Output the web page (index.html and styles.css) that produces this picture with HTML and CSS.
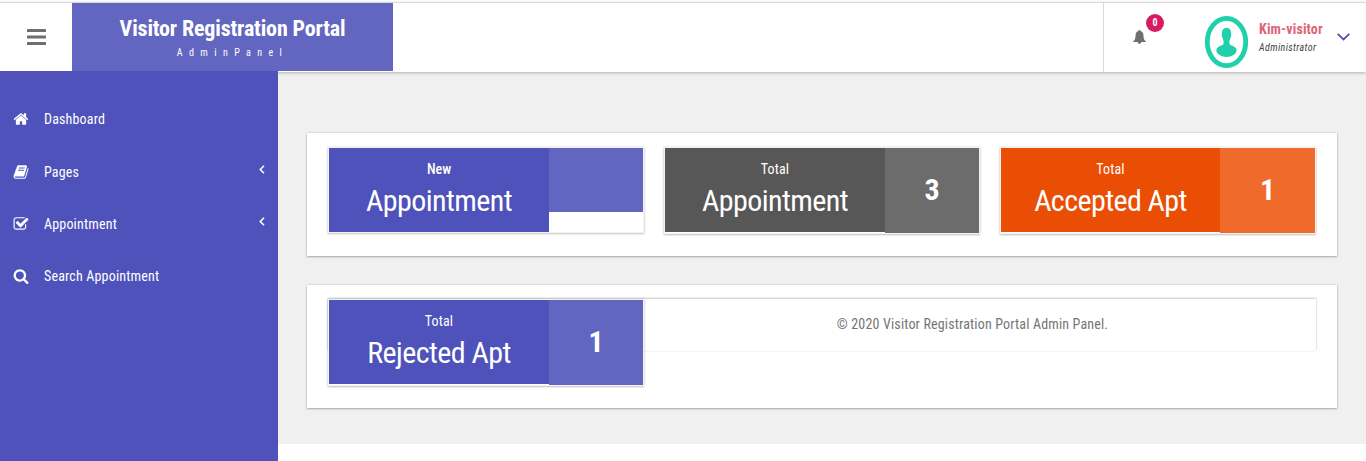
FILE: index.html
```html
<!DOCTYPE html>
<html lang="en">
<head>
<meta charset="utf-8">
<title>Visitor Registration Portal</title>
<link rel="stylesheet" href="styles.css">
</head>
<body>
<header class="topbar">
  <div class="menu-toggle"><svg width="19" height="16" viewBox="0 0 19 16"><rect width="19" height="3" rx=".6"/><rect y="6.500" width="19" height="3" rx=".6"/><rect y="13" width="19" height="3" rx=".6"/></svg></div>
  <div class="brand"><div class="brand-title">Visitor Registration Portal</div><div class="brand-sub">AdminPanel</div></div>
  <div class="account">
    <div class="bell"><svg width="13" height="14" viewBox="0 0 13 14"><path d="M6.500 0C7.100 0 7.500.4 7.400 1c2 .5 3 2 3 4 0 3 .6 5.300 2.600 6.500v.6H8.300a1.800 1.800 0 0 1-3.600 0H0v-.6C2 10.300 2.600 8 2.600 5c0-2 1-3.500 3-4C5.500.4 5.900 0 6.500 0z"/></svg><span class="badge">0</span></div>
    <svg class="avatar" width="44" height="54" viewBox="0 0 44 54"><ellipse cx="22.500" cy="27" rx="19.200" ry="23.600" fill="#fff" stroke="#20d0ab" stroke-width="4.800"/><path d="M22.500 13c3.500 0 5 2.700 4.700 7-.2 2.500-1.200 4-1.600 5.500-.5 2.500 0 4 1 4.500 2.500 1.200 6 2 6 5.500 0 3.500-5 6.500-10.100 6.500s-10.100-3-10.100-6.500c0-3.500 3.500-4.300 6-5.500 1-.5 1.500-2 1-4.500-.4-1.500-1.400-3-1.600-5.500-.3-4.300 1.200-7 4.700-7z" fill="#20d0ab"/></svg>
    <div class="who"><div class="who-name">Kim-visitor</div><div class="who-role">Administrator</div></div>
    <svg class="chevron" width="13" height="8" viewBox="0 0 13 8"><path d="M.7.9l5.800 5.600L12.300.9"/></svg>
  </div>
</header>
<div class="shell">
  <nav class="sidebar">
    <a class="nav-item"><svg class="icon" viewBox="0 0 1792 1792"><path d="M1472 992v480q0 26-19 45t-45 19h-384v-384h-256v384h-384q-26 0-45-19t-19-45v-480q0-1 .5-3t.5-3l575-474 575 474q1 2 1 6zm223-69l-62 74q-8 9-21 11h-3q-13 0-21-7l-692-577-692 577q-12 8-24 7-13-2-21-11l-62-74q-8-10-7-23.500t11-21.500l719-599q32-26 76-26t76 26l244 204v-195q0-14 9-23t23-9h192q14 0 23 9t9 23v408l219 182q10 8 11 21.500t-7 23.500z"/></svg><span>Dashboard</span></a>
    <a class="nav-item"><svg class="icon" viewBox="0 0 1792 1792"><path d="M1703 478q40 57 18 129l-275 906q-19 64-76.500 107.500t-122.500 43.500h-923q-77 0-148.500-53.500t-99.500-131.500q-24-67-2-127 0-4 3-27t4-37q1-8-3-21.500t-3-19.500q2-11 8-21t16.500-23.500 16.500-23.500q23-38 45-91.500t30-91.500q3-10 .5-30t-.5-28q3-11 17-28t17-23q21-36 42-92t25-90q1-9-2.500-32t.5-28q4-13 22-30.500t22-22.500q19-26 42.500-84.500t27.500-96.500q1-8-3-25.500t-2-26.500q2-8 9-18t18-23 17-21q8-12 16.500-30.500t15-35 16-36 19.500-32 26.500-23.500 36-11.500 47.500 5.500l-1 3q38-9 51-9h761q74 0 114 56t18 130l-274 906q-36 119-71.500 153.500t-128.500 34.500h-869q-27 0-38 15-11 16-1 43 24 70 144 70h923q29 0 56-15.500t35-41.500l300-987q7-22 5-57 38 15 59 43zm-1064 2q-4 13 2 22.500t20 9.500h608q13 0 25.500-9.500t16.500-22.500l21-64q4-13-2-22.500t-20-9.500h-608q-13 0-25.500 9.500t-16.500 22.500zm-83 256q-4 13 2 22.500t20 9.500h608q13 0 25.500-9.500t16.500-22.500l21-64q4-13-2-22.500t-20-9.500h-608q-13 0-25.500 9.500t-16.500 22.500z"/></svg><span>Pages</span><svg class="caret" width="6" height="9" viewBox="0 0 6 9"><path d="M5 .8L1.300 4.500 5 8.200"/></svg></a>
    <a class="nav-item"><svg class="icon" viewBox="0 0 1792 1792"><path d="M1472 930v318q0 119-84.500 203.500t-203.500 84.500h-832q-119 0-203.500-84.500t-84.500-203.500v-832q0-119 84.500-203.500t203.500-84.500h832q63 0 117 25 15 7 18 23 3 17-9 29l-49 49q-10 10-23 10-3 0-9-2-23-6-45-6h-832q-66 0-113 47t-47 113v832q0 66 47 113t113 47h832q66 0 113-47t47-113v-254q0-13 9-22l64-64q10-10 23-10 6 0 12 3 20 8 20 29zm231-489l-814 814q-24 24-57 24t-57-24l-430-430q-24-24-24-57t24-57l110-110q24-24 57-24t57 24l263 263 647-647q24-24 57-24t57 24l110 110q24 24 24 57t-24 57z"/></svg><span>Appointment</span><svg class="caret" width="6" height="9" viewBox="0 0 6 9"><path d="M5 .8L1.300 4.500 5 8.200"/></svg></a>
    <a class="nav-item"><svg class="icon" viewBox="0 0 1792 1792"><path d="M1216 832q0-185-131.500-316.500t-316.500-131.500-316.500 131.500-131.500 316.500 131.500 316.500 316.500 131.500 316.500-131.500 131.500-316.500zm512 832q0 52-38 90t-90 38q-54 0-90-38l-343-342q-179 124-399 124-143 0-273.500-55.500t-225-150-150-225-55.500-273.500 55.500-273.500 150-225 225-150 273.500-55.500 273.500 55.500 225 150 150 225 55.500 273.500q0 220-124 399l343 343q37 37 37 90z"/></svg><span>Search Appointment</span></a>
  </nav>
  <main class="content">
    <section class="panel">
      <div class="card indigo"><div class="label"><div class="small strong">New</div><div class="big">Appointment</div></div><div class="count empty"></div></div>
      <div class="card gray"><div class="label"><div class="small">Total</div><div class="big">Appointment</div></div><div class="count">3</div></div>
      <div class="card orange"><div class="label"><div class="small">Total</div><div class="big">Accepted Apt</div></div><div class="count">1</div></div>
    </section>
    <section class="panel stacked">
      <footer class="copyright">© 2020 Visitor Registration Portal Admin Panel.</footer>
      <div class="card indigo"><div class="label"><div class="small">Total</div><div class="big">Rejected Apt</div></div><div class="count">1</div></div>
    </section>
  </main>
</div>
</body>
</html>
```
FILE: styles.css
```css
* { box-sizing: border-box; }
body { margin: 0; height: 461px; overflow: hidden; background: #fff; font-family: "Roboto Condensed", Roboto, sans-serif; font-stretch: 75%; font-size: 14px; padding-top: 2px; }
svg { display: block; flex: none; }
.topbar { position: relative; z-index: 2; height: 70px; display: flex; border-top: 1px solid #dadada; background: #fff; box-shadow: 0 1px 3px rgba(0,0,0,.25); }
.menu-toggle { width: 72px; height: 68px; padding: 26px 0 0 27px; }
.menu-toggle svg { fill: #6f6f6f; }
.brand { width: 321px; height: 68px; background: #6366c1; color: #fff; text-align: center; padding-top: 12px; }
.brand-title { font-size: 22px; line-height: 28px; font-weight: 700; letter-spacing: -.15px; white-space: nowrap; }
.brand-sub { font-size: 10px; line-height: 12px; margin-top: 4px; letter-spacing: 6.400px; font-weight: 400; }
.account { margin-left: auto; width: 263px; border-left: 1px solid #dadada; display: flex; }
.bell { position: relative; width: 100px; padding: 27px 0 0 29px; }
.bell svg { fill: #6f6f6f; }
.badge { position: absolute; left: 42px; top: 11px; width: 18px; height: 18px; border-radius: 50%; background: #d81b60; color: #fff; font-size: 10px; line-height: 18px; font-weight: 700; text-align: center; }
.avatar { margin-top: 12px; }
.who { margin: 16px 0 0 11px; width: 78px; white-space: nowrap; }
.who-name { color: #e06377; font-weight: 700; font-size: 14px; line-height: 20px; letter-spacing: .15px; }
.who-role { color: #444; font-style: italic; font-size: 10px; line-height: 16px; letter-spacing: .4px; padding-top: 1px; }
.chevron { margin-top: 30px; fill: none; stroke: #4e52ba; stroke-width: 1.8; }
.shell { display: flex; height: 390px; margin-top: -1px; }
.sidebar { position: relative; z-index: 3; width: 278px; background: #4e52ba; color: #fff; padding-top: 22px; }
.nav-item { height: 52.300px; display: flex; align-items: center; padding: 0 13px; font-weight: 400; letter-spacing: .17px; }
.nav-item:nth-child(2) { padding-top: 1px; }
.icon { width: 16px; height: 16px; fill: #fff; margin-right: 15px; }
.caret { margin: -4px 0 0 auto; fill: none; stroke: #fff; stroke-width: 1.600; }
.content { flex: 1; height: 373px; background: #f0f0f0; padding: 62px 29px 0; }
.panel { height: 123px; margin-bottom: 29px; padding: 14px 21px; background: #fff; box-shadow: 0 0 2px rgba(0,0,0,.2), 0 1px 2px rgba(0,0,0,.25); display: flex; justify-content: space-between; align-items: flex-start; }
.card { width: 316px; border: 1px solid #f3f3f3; background: #fff; box-shadow: 0 0 2px rgba(0,0,0,.15), 0 1px 2px rgba(0,0,0,.2); display: flex; align-items: flex-start; color: #fff; text-align: center; }
.label { width: 220px; height: 84px; padding-top: 11px; }
.small { font-size: 14px; line-height: 20px; letter-spacing: .15px; font-weight: 400; }
.strong { font-weight: 500; letter-spacing: 0; }
.big { font-size: 30px; line-height: 36px; margin-top: 4px; letter-spacing: -.57px; white-space: nowrap; }
.count { width: 94px; height: 85px; font-size: 30px; font-weight: 700; line-height: 84px; }
.empty { height: 64px; }
.indigo .label { background: #4e52ba; }
.indigo .count { background: #6366c1; }
.gray .label { background: #575757; }
.gray .count { background: #6c6c6c; }
.orange .label { width: 219px; background: #ea4e04; }
.orange .count { width: 95px; background: #ee6b2c; }
.stacked { display: grid; justify-content: start; }
.stacked > * { grid-area: 1 / 1; }
.copyright { width: 988px; height: 52px; padding-left: 301px; box-shadow: 0 -1px 2px rgba(0,0,0,.2), 0 0 2px rgba(0,0,0,.1); color: #757575; font-weight: 400; font-size: 14px; line-height: 51px; letter-spacing: .16px; text-align: center; }
```
